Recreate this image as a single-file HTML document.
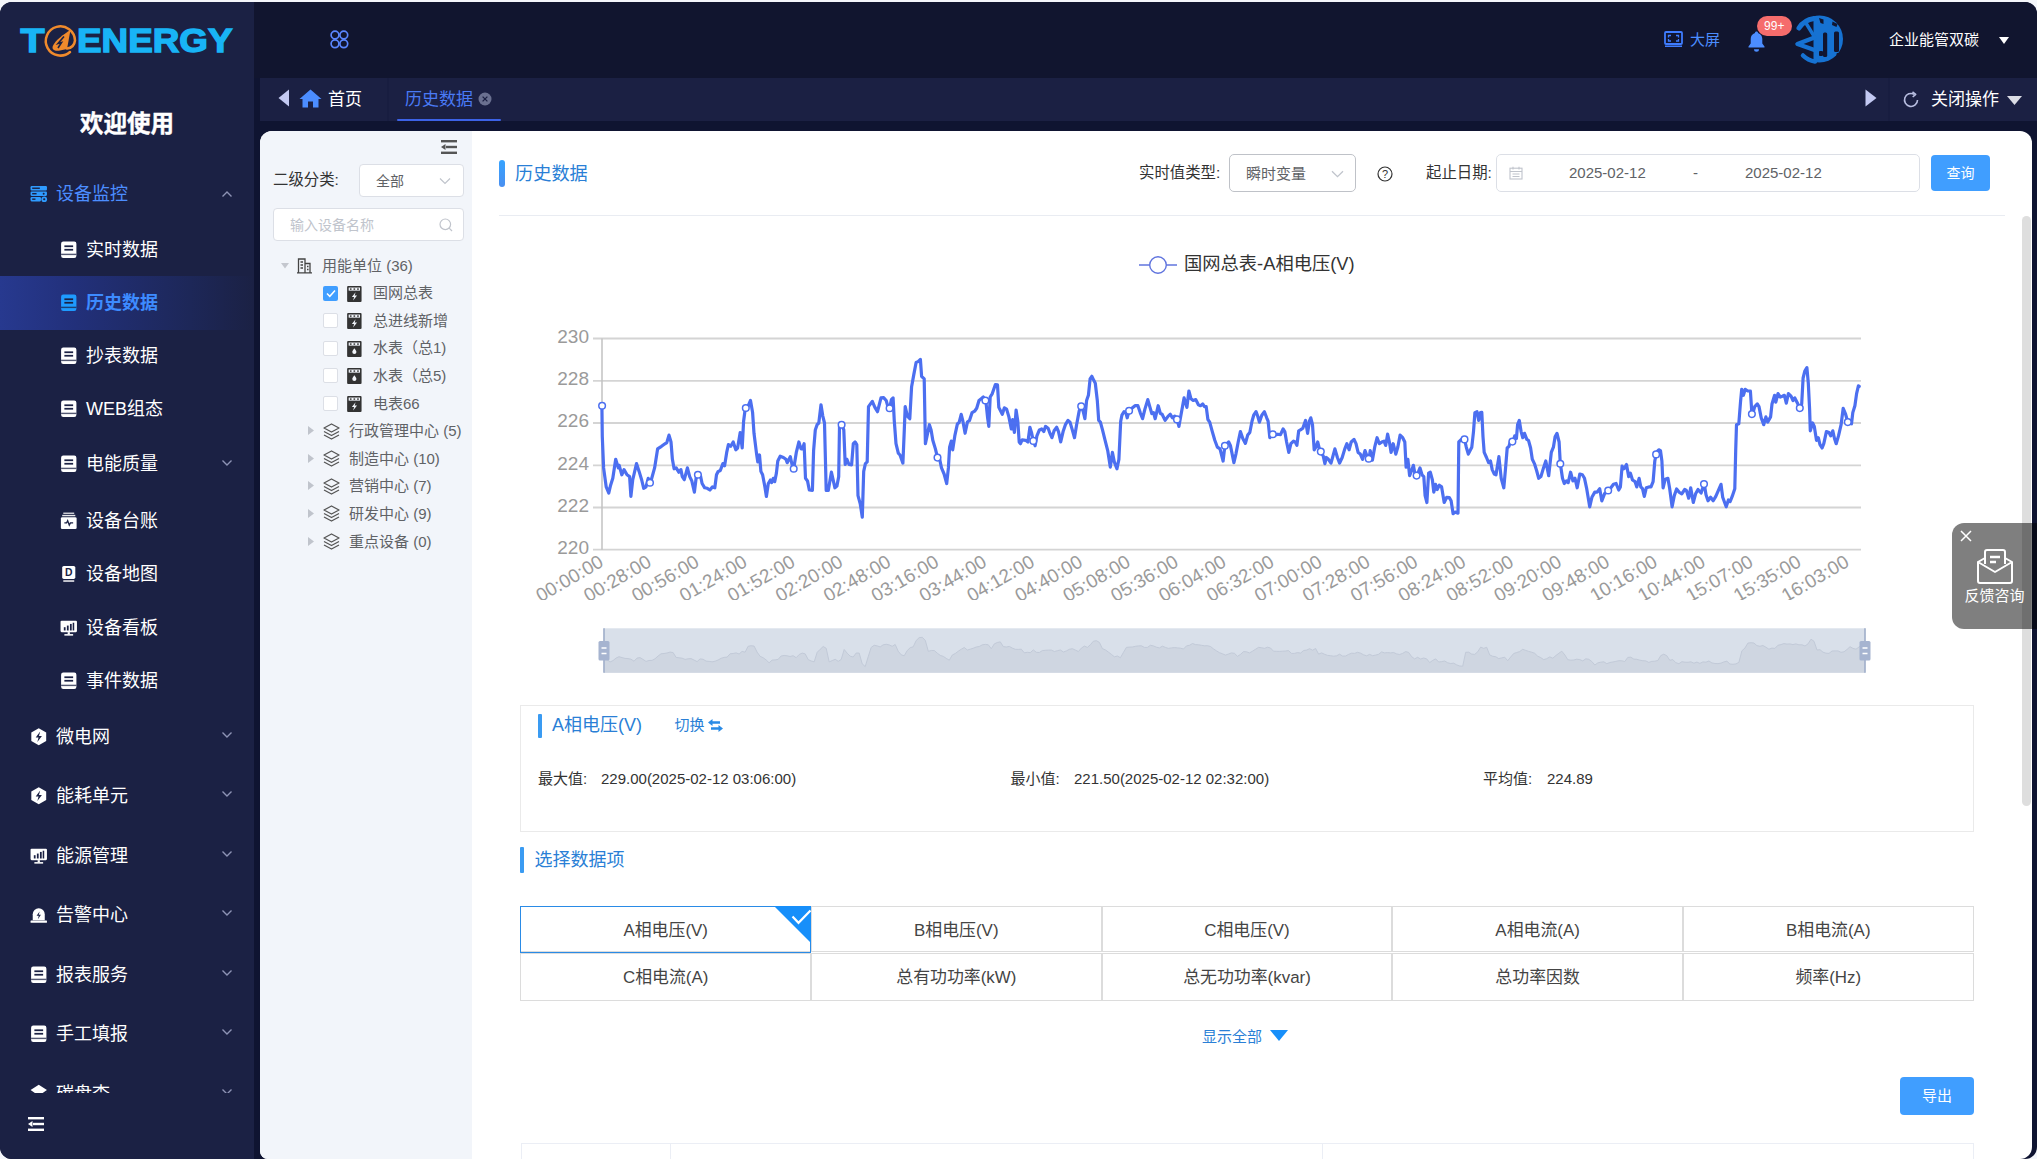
<!DOCTYPE html>
<html lang="zh-CN">
<head>
<meta charset="utf-8">
<title>历史数据</title>
<style>
*{box-sizing:border-box;margin:0;padding:0}
html,body{width:2037px;height:1159px;overflow:hidden;background:#f4f6fb}
body{font-family:"Liberation Sans","Noto Sans CJK SC",sans-serif;color:#333;font-size:14px}
.abs{position:absolute}
#win{position:absolute;left:0;top:2px;width:2037px;height:1157px;border-radius:12px;background:#0f1431;overflow:hidden}
#side{position:absolute;left:0;top:0;width:254px;height:1157px;background:#1b2144}
#topbar{position:absolute;left:254px;top:0;width:1783px;height:76px;background:#11152f}
#tabs{position:absolute;left:260px;top:76px;width:1777px;height:43px;background:#1b2043}
#panel{position:absolute;left:260px;top:129px;width:1772px;height:1028px;background:#fff;border-radius:12px 12px 12px 8px;overflow:hidden}
#tree{position:absolute;left:0;top:0;width:212px;height:1040px;background:#f2f5fa}
svg{display:block;overflow:visible}
.tt{font-size:15px;line-height:22px;color:#606266;white-space:nowrap}
.lab{font-size:15.400px;line-height:22px;color:#333;white-space:nowrap}
.dt{top:7px;font-size:15px;line-height:22px;color:#606266;white-space:nowrap}
.btn{background:#409eff;color:#fff;text-align:center;border-radius:4px;white-space:nowrap}
.st{font-size:15px;line-height:22px;color:#333;white-space:nowrap}
.cell{border:1px solid #dcdcdc;text-align:center;font-size:16.900px;line-height:43.500px;color:#444;white-space:nowrap}
#main{position:absolute;left:0;top:0;width:1772px;height:1040px}
/* sidebar */
#menu{position:absolute;left:0;top:1.300px;width:254px;height:1089.700px;overflow:hidden}
.mi{position:absolute;left:0;width:254px;height:54px;color:#fff;font-size:18px;line-height:54px;white-space:nowrap}
.mi svg.ic{position:absolute;top:18px;width:17.500px;height:17.500px}
.mi .tx{position:absolute}
.mi svg.ar{position:absolute;left:221px;top:21.500px;width:12px;height:8px}
.mi.open svg.ar{top:23.500px}
.l1 .tx{top:.7px}.l1 svg.ic{margin-top:.7px}
.l1 svg.ic{left:29.500px}.l1 .tx{left:56px}
.l2 svg.ic{left:59.500px}.l2 .tx{left:86px}
.mi.act{background:linear-gradient(90deg,#27398f 0%,#22307a 30%,#1d2758 75%,#1b2144 100%);color:#3d8bff;font-weight:bold}
.mi.open{color:#4c8dff}
</style>
</head>
<body>
<div id="win">
<div id="side">
  <svg class="abs" style="left:20px;top:20px" width="216" height="40" viewBox="0 0 216 40">
    <text x="0.500" y="29.500" font-family="Liberation Sans, sans-serif" font-weight="bold" font-size="33.500" fill="#18b4f6" stroke="#18b4f6" stroke-width="1.400" textLength="24" lengthAdjust="spacingAndGlyphs">T</text>
    <path d="M50 30A14.600 14.600 0 1 1 55 18.500c-.5 4.500-3.500 7.500-8 8" fill="none" stroke="#f08a2c" stroke-width="2.500" stroke-linecap="round"/>
    <path d="M50.500 8C44 12 35 18.500 32.800 24c-1.300 4 2.200 5.500 7.200 4.500l7-1.500z" fill="#f08a2c"/>
    <path d="M44 14.500l-6 7 3.500-1-3.500 5.500" fill="none" stroke="#1b2144" stroke-width="1.600"/>
    <text x="57" y="29.500" font-family="Liberation Sans, sans-serif" font-weight="bold" font-size="33.500" fill="#18b4f6" stroke="#18b4f6" stroke-width="1.400" textLength="155.500" lengthAdjust="spacingAndGlyphs">ENERGY</text>
  </svg>
  <div class="abs" style="left:0;top:105px;width:254px;text-align:center;color:#fff;font-weight:bold;font-size:23.500px;line-height:34px;-webkit-text-stroke:.4px #fff">欢迎使用</div>
  <div id="menu">
    <div class="mi l1 open" style="top:163px"><svg class="ic" style="color:#2f9bff" viewBox="0 0 16 16"><rect x="0.500" y="1" width="15" height="4" rx="1" fill="currentColor"/><rect x="0.500" y="6" width="15" height="4" rx="1" fill="currentColor"/><rect x="0.500" y="11" width="9.500" height="4" rx="1" fill="currentColor"/><circle cx="13" cy="13" r="2.600" fill="currentColor"/><rect x="2" y="2.300" width="7" height="1.300" fill="#1b2144"/><rect x="2" y="7.300" width="4" height="1.300" fill="#1b2144"/><rect x="2" y="12.300" width="3" height="1.300" fill="#1b2144"/><circle cx="13" cy="13" r="1" fill="#1b2144"/><circle cx="12.500" cy="8" r=".9" fill="#1b2144"/></svg><span class="tx">设备监控</span><svg class="ar" viewBox="0 0 12 8"><path d="M1.5 6.500L6 2l4.500 4.500" fill="none" stroke="#8e93b5" stroke-width="1.4"/></svg></div>
    <div class="mi l2" style="top:220px"><svg class="ic" viewBox="0 0 16 16"><path d="M3 0.5h10a2 2 0 0 1 2 2v11a2 2 0 0 1-2 2H3a2 2 0 0 1-2-2v-11a2 2 0 0 1 2-2z" fill="currentColor"/><rect x="4" y="4" width="8" height="1.6" fill="#1b2144"/><rect x="4" y="7.2" width="8" height="1.6" fill="#1b2144"/><rect x="1" y="11.6" width="14" height="1.3" fill="#1b2144" opacity=".75"/></svg><span class="tx">实时数据</span></div>
    <div class="mi l2 act" style="top:273px"><svg class="ic" style="color:#1e9bff" viewBox="0 0 16 16"><path d="M3 0.5h10a2 2 0 0 1 2 2v11a2 2 0 0 1-2 2H3a2 2 0 0 1-2-2v-11a2 2 0 0 1 2-2z" fill="currentColor"/><rect x="4" y="4" width="8" height="1.6" fill="#1b2144"/><rect x="4" y="7.2" width="8" height="1.6" fill="#1b2144"/><rect x="1" y="11.6" width="14" height="1.3" fill="#1b2144" opacity=".75"/></svg><span class="tx">历史数据</span></div>
    <div class="mi l2" style="top:326px"><svg class="ic" viewBox="0 0 16 16"><path d="M3 0.5h10a2 2 0 0 1 2 2v11a2 2 0 0 1-2 2H3a2 2 0 0 1-2-2v-11a2 2 0 0 1 2-2z" fill="currentColor"/><rect x="4" y="4" width="8" height="1.6" fill="#1b2144"/><rect x="4" y="7.2" width="8" height="1.6" fill="#1b2144"/><rect x="1" y="11.6" width="14" height="1.3" fill="#1b2144" opacity=".75"/></svg><span class="tx">抄表数据</span></div>
    <div class="mi l2" style="top:379px"><svg class="ic" viewBox="0 0 16 16"><path d="M3 0.5h10a2 2 0 0 1 2 2v11a2 2 0 0 1-2 2H3a2 2 0 0 1-2-2v-11a2 2 0 0 1 2-2z" fill="currentColor"/><rect x="4" y="4" width="8" height="1.6" fill="#1b2144"/><rect x="4" y="7.2" width="8" height="1.6" fill="#1b2144"/><rect x="1" y="11.6" width="14" height="1.3" fill="#1b2144" opacity=".75"/></svg><span class="tx">WEB组态</span></div>
    <div class="mi l2" style="top:434px"><svg class="ic" viewBox="0 0 16 16"><path d="M3 0.5h10a2 2 0 0 1 2 2v11a2 2 0 0 1-2 2H3a2 2 0 0 1-2-2v-11a2 2 0 0 1 2-2z" fill="currentColor"/><rect x="4" y="4" width="8" height="1.6" fill="#1b2144"/><rect x="4" y="7.2" width="8" height="1.6" fill="#1b2144"/><rect x="1" y="11.6" width="14" height="1.3" fill="#1b2144" opacity=".75"/></svg><span class="tx">电能质量</span><svg class="ar" viewBox="0 0 12 8"><path d="M1.5 1.5L6 6l4.500-4.500" fill="none" stroke="#8e93b5" stroke-width="1.4"/></svg></div>
    <div class="mi l2" style="top:491px"><svg class="ic" viewBox="0 0 16 16"><rect x="3" y="0.500" width="10" height="1.300" fill="currentColor" opacity=".8"/><rect x="2" y="2.600" width="12" height="1.300" fill="currentColor" opacity=".9"/><rect x="0.800" y="4.800" width="14.400" height="10.700" rx="1.200" fill="currentColor"/><path d="M4 10h2l1-2 1.500 4 1-2H12" fill="none" stroke="#1b2144" stroke-width="1.200"/></svg><span class="tx">设备台账</span></div>
    <div class="mi l2" style="top:544px"><svg class="ic" viewBox="0 0 16 16"><rect x="2" y="0.800" width="12" height="12" rx="1.500" fill="currentColor"/><text x="8" y="10.300" font-family="Liberation Sans, sans-serif" font-weight="bold" font-size="9.500" text-anchor="middle" fill="#1b2144">D</text><rect x="3" y="14" width="10" height="1.300" fill="currentColor"/></svg><span class="tx">设备地图</span></div>
    <div class="mi l2" style="top:598px"><svg class="ic" viewBox="0 0 16 16"><rect x="0.500" y="1.500" width="15" height="10.500" rx="1" fill="currentColor"/><rect x="4" y="13.800" width="8" height="1.400" fill="currentColor"/><rect x="7" y="12" width="2" height="2" fill="currentColor"/><rect x="3.500" y="7.500" width="1.600" height="3" fill="#1b2144"/><rect x="6.300" y="6" width="1.600" height="4.500" fill="#1b2144"/><rect x="9.100" y="4.500" width="1.600" height="6" fill="#1b2144"/><rect x="11.600" y="3.400" width="1.400" height="7.100" fill="#1b2144"/></svg><span class="tx">设备看板</span></div>
    <div class="mi l2" style="top:651px"><svg class="ic" viewBox="0 0 16 16"><path d="M3 0.5h10a2 2 0 0 1 2 2v11a2 2 0 0 1-2 2H3a2 2 0 0 1-2-2v-11a2 2 0 0 1 2-2z" fill="currentColor"/><rect x="4" y="4" width="8" height="1.6" fill="#1b2144"/><rect x="4" y="7.2" width="8" height="1.6" fill="#1b2144"/><rect x="1" y="11.6" width="14" height="1.3" fill="#1b2144" opacity=".75"/></svg><span class="tx">事件数据</span></div>
    <div class="mi l1" style="top:706px"><svg class="ic" viewBox="0 0 16 16"><path d="M8 0.300L14.800 4.100V11.900L8 15.700L1.200 11.900V4.100z" fill="currentColor"/><path d="M9.300 3.200L5.200 8.700H7.800L6.700 12.800L10.900 7.200H8.200z" fill="#1b2144"/></svg><span class="tx">微电网</span><svg class="ar" viewBox="0 0 12 8"><path d="M1.5 1.5L6 6l4.500-4.500" fill="none" stroke="#8e93b5" stroke-width="1.4"/></svg></div>
    <div class="mi l1" style="top:765px"><svg class="ic" viewBox="0 0 16 16"><path d="M8 0.300L14.800 4.100V11.900L8 15.700L1.200 11.900V4.100z" fill="currentColor"/><path d="M9.300 3.200L5.200 8.700H7.800L6.700 12.800L10.900 7.200H8.200z" fill="#1b2144"/></svg><span class="tx">能耗单元</span><svg class="ar" viewBox="0 0 12 8"><path d="M1.5 1.5L6 6l4.500-4.500" fill="none" stroke="#8e93b5" stroke-width="1.4"/></svg></div>
    <div class="mi l1" style="top:825px"><svg class="ic" viewBox="0 0 16 16"><rect x="0.500" y="1.500" width="15" height="10.500" rx="1" fill="currentColor"/><rect x="4" y="13.800" width="8" height="1.400" fill="currentColor"/><rect x="7" y="12" width="2" height="2" fill="currentColor"/><rect x="3.500" y="7.500" width="1.600" height="3" fill="#1b2144"/><rect x="6.300" y="6" width="1.600" height="4.500" fill="#1b2144"/><rect x="9.100" y="4.500" width="1.600" height="6" fill="#1b2144"/><rect x="11.600" y="3.400" width="1.400" height="7.100" fill="#1b2144"/></svg><span class="tx">能源管理</span><svg class="ar" viewBox="0 0 12 8"><path d="M1.5 1.5L6 6l4.500-4.500" fill="none" stroke="#8e93b5" stroke-width="1.4"/></svg></div>
    <div class="mi l1" style="top:884px"><svg class="ic" viewBox="0 0 16 16"><path d="M2.500 13V7.500a5.500 5.500 0 0 1 11 0V13z" fill="currentColor"/><rect x="0.500" y="13.300" width="15" height="2" rx=".5" fill="currentColor"/><path d="M8.800 5L6 9h2l-.800 3L10 8H8z" fill="#1b2144"/></svg><span class="tx">告警中心</span><svg class="ar" viewBox="0 0 12 8"><path d="M1.5 1.5L6 6l4.500-4.500" fill="none" stroke="#8e93b5" stroke-width="1.4"/></svg></div>
    <div class="mi l1" style="top:944px"><svg class="ic" viewBox="0 0 16 16"><path d="M3 0.5h10a2 2 0 0 1 2 2v11a2 2 0 0 1-2 2H3a2 2 0 0 1-2-2v-11a2 2 0 0 1 2-2z" fill="currentColor"/><rect x="4" y="4" width="8" height="1.6" fill="#1b2144"/><rect x="4" y="7.2" width="8" height="1.6" fill="#1b2144"/><rect x="1" y="11.6" width="14" height="1.3" fill="#1b2144" opacity=".75"/></svg><span class="tx">报表服务</span><svg class="ar" viewBox="0 0 12 8"><path d="M1.5 1.5L6 6l4.500-4.500" fill="none" stroke="#8e93b5" stroke-width="1.4"/></svg></div>
    <div class="mi l1" style="top:1003px"><svg class="ic" viewBox="0 0 16 16"><path d="M3 0.5h10a2 2 0 0 1 2 2v11a2 2 0 0 1-2 2H3a2 2 0 0 1-2-2v-11a2 2 0 0 1 2-2z" fill="currentColor"/><rect x="4" y="4" width="8" height="1.6" fill="#1b2144"/><rect x="4" y="7.2" width="8" height="1.6" fill="#1b2144"/><rect x="1" y="11.6" width="14" height="1.3" fill="#1b2144" opacity=".75"/></svg><span class="tx">手工填报</span><svg class="ar" viewBox="0 0 12 8"><path d="M1.5 1.5L6 6l4.500-4.500" fill="none" stroke="#8e93b5" stroke-width="1.4"/></svg></div>
    <div class="mi l1" style="top:1063px"><svg class="ic" style="margin-top:-1.500px" viewBox="0 0 16 16"><path d="M8 1.500L15.500 6.500 8 11.500 0.500 6.500z" fill="currentColor"/><path d="M0.500 9.500L8 14.500l7.500-5" fill="none" stroke="currentColor" stroke-width="1.500"/></svg><span class="tx">碳盘查</span><svg class="ar" viewBox="0 0 12 8"><path d="M1.5 1.5L6 6l4.500-4.500" fill="none" stroke="#8e93b5" stroke-width="1.4"/></svg></div>
  </div>
  <svg class="abs" style="left:28px;top:1115px;color:#fff" width="16" height="14" viewBox="0 0 16 14"><rect x="0" y="0" width="16" height="2.400" fill="currentColor"/><rect x="0" y="11.600" width="16" height="2.400" fill="currentColor"/><rect x="5" y="5.800" width="11" height="2.400" fill="currentColor"/><path d="M0 7L4.500 4v6z" fill="currentColor"/></svg>
</div>
<div id="topbar">
  <svg class="abs" style="left:76px;top:28px" width="19" height="19" viewBox="0 0 19 19" fill="none" stroke="#5a86ff" stroke-width="1.700"><circle cx="5" cy="5" r="3.900"/><circle cx="13.800" cy="5" r="3.900"/><circle cx="5" cy="13.800" r="3.900"/><circle cx="13.800" cy="13.800" r="3.900"/></svg>
  <svg class="abs" style="left:1410px;top:29px" width="19" height="16" viewBox="0 0 19 16" fill="none" stroke="#3f7cff"><rect x="1" y="1" width="17" height="12" rx="1" stroke-width="1.800"/><path d="M4.500 6.500V4.500h2.500M12 4.500h2.500v2M14.500 8v2H12M7 10H4.500V8" stroke-width="1.300"/><path d="M1 15.300h17" stroke-width="1.400"/></svg>
  <div class="abs" style="left:1436px;top:27px;font-size:15px;line-height:22px;color:#4c8dff">大屏</div>
  <svg class="abs" style="left:1493px;top:28px" width="19" height="22" viewBox="0 0 19 22"><path d="M9.500 1.500c.9 0 1.500.6 1.500 1.400 2.800.8 4.300 3.300 4.300 6.200v4.400l2.200 3v1H1.500v-1l2.200-3V9.100c0-2.900 1.500-5.400 4.300-6.200 0-.8.600-1.400 1.500-1.400z" fill="#4c8dff"/><path d="M7 19.300h5a2.500 2.500 0 0 1-5 0z" fill="#4c8dff"/></svg>
  <div class="abs" style="left:1503px;top:14px;width:34.500px;height:20px;border-radius:10px;background:#f56c6c;color:#fff;font-size:12px;line-height:20px;text-align:center">99+</div>
  <svg class="abs" style="left:1539.500px;top:13px" width="50" height="50" viewBox="0 0 50 50"><defs><clipPath id="avc"><rect x="19.500" y="0" width="31" height="50"/></clipPath></defs><circle cx="25.500" cy="24" r="23.500" fill="#1672d2" clip-path="url(#avc)"/><g fill="#11152f"><rect x="29" y="17.500" width="4.200" height="24.500" rx="1.500"/><rect x="40" y="16.500" width="5" height="20.500" rx="1.500"/><path d="M25 3l4.500 1.500v4.500l-3-1z"/><path d="M38.500 6.500l5 2.500-1 3-4.500-2z"/><rect x="25" y="36" width="4" height="5" rx="1"/><rect x="42.500" y="38" width="2.500" height="4" rx="1"/></g><g fill="none" stroke="#1672d2" stroke-linecap="round" stroke-linejoin="round"><path d="M5 13Q10 5 20 3.500" stroke-width="5"/><path d="M12.500 9l6.500 10.500" stroke-width="3.500"/><path d="M20.500 22.500L3.500 29l17 6" stroke-width="4.500"/><path d="M9 40.500q5 5 12 6" stroke-width="4.500"/></g></svg>
  <div class="abs" style="left:1635px;top:27px;font-size:15px;line-height:22px;color:#fff;white-space:nowrap">企业能管双碳</div>
  <svg class="abs" style="left:1745px;top:35px" width="10" height="7" viewBox="0 0 10 7"><path d="M0 0h10L5 7z" fill="#fff"/></svg>
</div>
<div id="tabs">
  <div class="abs" style="left:127px;top:0;width:2px;height:43px;background:#181d40"></div>
  <div class="abs" style="left:1628px;top:0;width:2px;height:43px;background:#181d40"></div>
  <svg class="abs" style="left:18px;top:11px" width="12" height="18" viewBox="0 0 12 18"><path d="M11 0.500v17L0.500 9z" fill="#c3c9f2"/></svg>
  <svg class="abs" style="left:39px;top:11px" width="23" height="19" viewBox="0 0 23 19"><path d="M11.500 0.500L22.500 10h-3v8.500h-5.500v-6h-5v6H3.500V10h-3z" fill="#4c8dff"/></svg>
  <div class="abs" style="left:68px;top:9px;font-size:17px;line-height:26px;color:#fff">首页</div>
  <div class="abs" style="left:145px;top:9px;font-size:17px;line-height:26px;color:#4a7af5;white-space:nowrap">历史数据</div>
  <svg class="abs" style="left:218px;top:14px" width="14" height="14" viewBox="0 0 14 14"><circle cx="7" cy="7" r="6.500" fill="#6a7090"/><path d="M4.600 4.600l4.800 4.800M9.400 4.600L4.600 9.400" stroke="#1b2043" stroke-width="1.300"/></svg>
  <div class="abs" style="left:137px;top:40.500px;width:104px;height:2.500px;background:#3c62e6;border-radius:1px"></div>
  <svg class="abs" style="left:1605px;top:11px" width="12" height="18" viewBox="0 0 12 18"><path d="M0.500 0.500v17L11.500 9z" fill="#c3c9f2"/></svg>
  <svg class="abs" style="left:1642px;top:13px" width="18" height="18" viewBox="0 0 18 18" fill="none" stroke="#b7bde0" stroke-width="1.600"><path d="M15.500 9A6.500 6.500 0 1 1 12.200 3.300"/><path d="M10.500 0.800l3.200 2.500-3 2.700" stroke-linejoin="round"/></svg>
  <div class="abs" style="left:1671px;top:9px;font-size:17px;line-height:26px;color:#fff;white-space:nowrap">关闭操作</div>
  <svg class="abs" style="left:1747px;top:18px" width="15" height="9" viewBox="0 0 15 9"><path d="M0 0h15L7.500 9z" fill="#dcdde6"/></svg>
</div>
<div id="panel">
<div id="tree">
<svg class="abs" style="left:181px;top:9px;color:#555" width="16" height="14" viewBox="0 0 16 14"><rect x="0" y="0" width="16" height="2.400" fill="currentColor"/><rect x="0" y="11.600" width="16" height="2.400" fill="currentColor"/><rect x="5" y="5.800" width="11" height="2.400" fill="currentColor"/><path d="M0 7L4.500 4v6z" fill="currentColor"/></svg>
<div class="abs" style="left:13px;top:38px;font-size:15.400px;line-height:22px;color:#333;white-space:nowrap">二级分类:</div>
<div class="abs" style="left:99px;top:33px;width:105px;height:33px;border:1px solid #dcdfe6;border-radius:4px;background:#fff"><span class="abs" style="left:16px;top:5px;font-size:14px;line-height:22px;color:#606266">全部</span><svg class="abs" style="left:79px;top:12px" width="12" height="8" viewBox="0 0 12 8"><path d="M1 1.500L6 6.500l5-5" fill="none" stroke="#c0c4cc" stroke-width="1.200"/></svg></div>
<div class="abs" style="left:13px;top:77px;width:191px;height:33px;border:1px solid #dcdfe6;border-radius:4px;background:#fff"><span class="abs" style="left:16px;top:5px;font-size:14px;line-height:22px;color:#c0c4cc;white-space:nowrap">输入设备名称</span><svg class="abs" style="left:165px;top:9px" width="14" height="14" viewBox="0 0 14 14" fill="none" stroke="#c0c4cc" stroke-width="1.200"><circle cx="6.300" cy="6.300" r="5.300"/><path d="M10.200 10.200l2.800 2.800"/></svg></div>
<svg class="abs" style="left:21px;top:132.0px" width="8" height="5.500" viewBox="0 0 9 6"><path d="M0 0h9L4.500 6z" fill="#c4c7ce"/></svg>
<svg class="abs" style="left:37px;top:127.3px" width="15" height="16" viewBox="0 0 15 16" fill="none" stroke="#444" stroke-width="1.300"><path d="M1.500 14.500V1h6.500v13.500M8 5.500h5v9M0 14.800h15M3.500 4h2.500M3.500 7h2.500M3.500 10h2.500M10 8.500h1.500M10 11.500h1.500"/></svg>
<div class="abs tt" style="left:62px;top:123.5px">用能单位 (36)</div>
<div class="abs" style="left:63px;top:154.6px;width:15px;height:15px;border-radius:2px;background:#409eff"><svg class="abs" style="left:2.500px;top:3px" width="10" height="9" viewBox="0 0 10 9"><path d="M1 4.500l2.800 2.800L9 1.500" fill="none" stroke="#fff" stroke-width="1.500"/></svg></div>
<svg class="abs" style="left:87px;top:154.6px" width="14.700" height="16.500" viewBox="0 0 14 16"><rect x="0" y="0" width="14" height="15.500" rx="1" fill="#333"/><rect x="1.500" y="1.500" width="11" height="3" fill="#f2f5fa"/><rect x="2.700" y="2.300" width="1.600" height="1.400" fill="#333"/><rect x="6.200" y="2.300" width="1.600" height="1.400" fill="#333"/><rect x="9.700" y="2.300" width="1.600" height="1.400" fill="#333"/><path d="M8.200 6L4.600 10.600h2.200l-1 3.400L9.600 9.200H7.300z" fill="#f2f5fa"/></svg>
<div class="abs tt" style="left:113px;top:151.1px">国网总表</div>
<div class="abs" style="left:63px;top:182.2px;width:15px;height:15px;border-radius:2px;background:#fff;border:1px solid #dcdfe6"></div>
<svg class="abs" style="left:87px;top:182.2px" width="14.700" height="16.500" viewBox="0 0 14 16"><rect x="0" y="0" width="14" height="15.500" rx="1" fill="#333"/><rect x="1.500" y="1.500" width="11" height="3" fill="#f2f5fa"/><rect x="2.700" y="2.300" width="1.600" height="1.400" fill="#333"/><rect x="6.200" y="2.300" width="1.600" height="1.400" fill="#333"/><rect x="9.700" y="2.300" width="1.600" height="1.400" fill="#333"/><path d="M8.200 6L4.600 10.600h2.200l-1 3.400L9.600 9.200H7.300z" fill="#f2f5fa"/></svg>
<div class="abs tt" style="left:113px;top:178.7px">总进线新增</div>
<div class="abs" style="left:63px;top:209.8px;width:15px;height:15px;border-radius:2px;background:#fff;border:1px solid #dcdfe6"></div>
<svg class="abs" style="left:87px;top:209.8px" width="14.700" height="16.500" viewBox="0 0 14 16"><rect x="0" y="0" width="14" height="15.500" rx="1" fill="#333"/><rect x="1.500" y="1.500" width="11" height="3" fill="#f2f5fa"/><rect x="2.700" y="2.300" width="1.600" height="1.400" fill="#333"/><rect x="6.200" y="2.300" width="1.600" height="1.400" fill="#333"/><rect x="9.700" y="2.300" width="1.600" height="1.400" fill="#333"/><path d="M7 7c1.300 1.700 2 2.800 2 3.700a2 2 0 0 1-4 0c0-.9.700-2 2-3.700z" fill="#f2f5fa"/></svg>
<div class="abs tt" style="left:113px;top:206.3px">水表（总1)</div>
<div class="abs" style="left:63px;top:237.4px;width:15px;height:15px;border-radius:2px;background:#fff;border:1px solid #dcdfe6"></div>
<svg class="abs" style="left:87px;top:237.4px" width="14.700" height="16.500" viewBox="0 0 14 16"><rect x="0" y="0" width="14" height="15.500" rx="1" fill="#333"/><rect x="1.500" y="1.500" width="11" height="3" fill="#f2f5fa"/><rect x="2.700" y="2.300" width="1.600" height="1.400" fill="#333"/><rect x="6.200" y="2.300" width="1.600" height="1.400" fill="#333"/><rect x="9.700" y="2.300" width="1.600" height="1.400" fill="#333"/><path d="M7 7c1.300 1.700 2 2.800 2 3.700a2 2 0 0 1-4 0c0-.9.700-2 2-3.700z" fill="#f2f5fa"/></svg>
<div class="abs tt" style="left:113px;top:233.9px">水表（总5)</div>
<div class="abs" style="left:63px;top:265.0px;width:15px;height:15px;border-radius:2px;background:#fff;border:1px solid #dcdfe6"></div>
<svg class="abs" style="left:87px;top:265.0px" width="14.700" height="16.500" viewBox="0 0 14 16"><rect x="0" y="0" width="14" height="15.500" rx="1" fill="#333"/><rect x="1.500" y="1.500" width="11" height="3" fill="#f2f5fa"/><rect x="2.700" y="2.300" width="1.600" height="1.400" fill="#333"/><rect x="6.200" y="2.300" width="1.600" height="1.400" fill="#333"/><rect x="9.700" y="2.300" width="1.600" height="1.400" fill="#333"/><path d="M8.200 6L4.600 10.600h2.200l-1 3.400L9.600 9.200H7.300z" fill="#f2f5fa"/></svg>
<div class="abs tt" style="left:113px;top:261.5px">电表66</div>
<svg class="abs" style="left:48px;top:295.1px" width="6" height="9" viewBox="0 0 6 9"><path d="M0 0v9L6 4.500z" fill="#c0c4cc"/></svg>
<svg class="abs" style="left:63px;top:291.6px" width="17" height="17" viewBox="0 0 17 17" fill="none" stroke="#555" stroke-width="1.300" stroke-linejoin="round"><path d="M8.500 1L16 5 8.500 9 1 5z"/><path d="M1 8.500l7.500 4 7.500-4"/><path d="M1 12l7.500 4 7.500-4"/></svg>
<div class="abs tt" style="left:89px;top:289.1px">行政管理中心 (5)</div>
<svg class="abs" style="left:48px;top:322.7px" width="6" height="9" viewBox="0 0 6 9"><path d="M0 0v9L6 4.500z" fill="#c0c4cc"/></svg>
<svg class="abs" style="left:63px;top:319.2px" width="17" height="17" viewBox="0 0 17 17" fill="none" stroke="#555" stroke-width="1.300" stroke-linejoin="round"><path d="M8.500 1L16 5 8.500 9 1 5z"/><path d="M1 8.500l7.500 4 7.500-4"/><path d="M1 12l7.500 4 7.500-4"/></svg>
<div class="abs tt" style="left:89px;top:316.7px">制造中心 (10)</div>
<svg class="abs" style="left:48px;top:350.3px" width="6" height="9" viewBox="0 0 6 9"><path d="M0 0v9L6 4.500z" fill="#c0c4cc"/></svg>
<svg class="abs" style="left:63px;top:346.8px" width="17" height="17" viewBox="0 0 17 17" fill="none" stroke="#555" stroke-width="1.300" stroke-linejoin="round"><path d="M8.500 1L16 5 8.500 9 1 5z"/><path d="M1 8.500l7.500 4 7.500-4"/><path d="M1 12l7.500 4 7.500-4"/></svg>
<div class="abs tt" style="left:89px;top:344.3px">营销中心 (7)</div>
<svg class="abs" style="left:48px;top:377.9px" width="6" height="9" viewBox="0 0 6 9"><path d="M0 0v9L6 4.500z" fill="#c0c4cc"/></svg>
<svg class="abs" style="left:63px;top:374.4px" width="17" height="17" viewBox="0 0 17 17" fill="none" stroke="#555" stroke-width="1.300" stroke-linejoin="round"><path d="M8.500 1L16 5 8.500 9 1 5z"/><path d="M1 8.500l7.500 4 7.500-4"/><path d="M1 12l7.500 4 7.500-4"/></svg>
<div class="abs tt" style="left:89px;top:371.9px">研发中心 (9)</div>
<svg class="abs" style="left:48px;top:405.5px" width="6" height="9" viewBox="0 0 6 9"><path d="M0 0v9L6 4.500z" fill="#c0c4cc"/></svg>
<svg class="abs" style="left:63px;top:402.0px" width="17" height="17" viewBox="0 0 17 17" fill="none" stroke="#555" stroke-width="1.300" stroke-linejoin="round"><path d="M8.500 1L16 5 8.500 9 1 5z"/><path d="M1 8.500l7.500 4 7.500-4"/><path d="M1 12l7.500 4 7.500-4"/></svg>
<div class="abs tt" style="left:89px;top:399.5px">重点设备 (0)</div>
</div>
<div id="main">
<div class="abs" style="left:239px;top:29px;width:6px;height:27px;border-radius:3px;background:linear-gradient(180deg,#36a3ff,#4a8ff0)"></div>
<div class="abs" style="left:255px;top:29.5px;font-size:18.200px;line-height:27px;color:#2a7fd6;white-space:nowrap">历史数据</div>
<div class="abs lab" style="left:879px;top:31px">实时值类型:</div>
<div class="abs" style="left:969px;top:23px;width:127px;height:38px;border:1px solid #bfc2c8;border-radius:5px;background:#fff"><span class="abs" style="left:16px;top:8px;font-size:15px;line-height:22px;color:#606266;white-space:nowrap">瞬时变量</span><svg class="abs" style="left:101px;top:15px" width="13" height="8" viewBox="0 0 13 8"><path d="M1 1.200L6.500 6.700 12 1.200" fill="none" stroke="#c0c4cc" stroke-width="1.300"/></svg></div>
<svg class="abs" style="left:1117px;top:35px" width="16" height="16" viewBox="0 0 16 16"><circle cx="8" cy="8" r="7" fill="none" stroke="#333" stroke-width="1.200"/><text x="8" y="12" font-size="11" font-family="Liberation Sans, sans-serif" text-anchor="middle" fill="#333">?</text></svg>
<div class="abs lab" style="left:1166px;top:31px">起止日期:</div>
<div class="abs" style="left:1236px;top:23px;width:424px;height:38px;border:1px solid #dcdfe6;border-radius:5px;background:#fff"><svg class="abs" style="left:12px;top:11px" width="14" height="14" viewBox="0 0 14 14" fill="none" stroke="#c0c4cc" stroke-width="1.100"><rect x="1" y="2.200" width="12" height="10.800"/><path d="M1 5.500h12M4 0.800v2.800M10 0.800v2.800M3.500 8h7M3.500 10.500h7"/></svg><span class="abs dt" style="left:72px">2025-02-12</span><span class="abs dt" style="left:196px">-</span><span class="abs dt" style="left:248px">2025-02-12</span></div>
<div class="abs btn" style="left:1671px;top:24px;width:59px;height:36px;line-height:36px;font-size:14px">查询</div>
<div class="abs" style="left:239px;top:83.5px;width:1506px;height:1px;background:#e9ecf2"></div>
<div class="abs" style="left:1762px;top:85px;width:9.300px;height:590px;border-radius:4.500px;background:#dedede"></div>
<svg class="abs" style="left:878px;top:124px" width="40" height="20" viewBox="0 0 40 20"><path d="M1 10h38" stroke="#6074de" stroke-width="1.400"/><circle cx="20" cy="10" r="8.300" fill="#fff" stroke="#6074de" stroke-width="1.400"/></svg>
<div class="abs" style="left:924px;top:120px;font-size:18.300px;line-height:26px;color:#333;white-space:nowrap">国网总表-A相电压(V)</div>
<svg class="abs" style="left:0;top:0" width="1772" height="700" viewBox="260 131 1772 700" font-family="Liberation Sans, sans-serif">
<path d="M593 338.5H1861" stroke="#d4d4d4" stroke-width="1.800"/>
<path d="M593 380.8H1861" stroke="#d4d4d4" stroke-width="1.800"/>
<path d="M593 423.0H1861" stroke="#d4d4d4" stroke-width="1.800"/>
<path d="M593 465.3H1861" stroke="#d4d4d4" stroke-width="1.800"/>
<path d="M593 507.5H1861" stroke="#d4d4d4" stroke-width="1.800"/>
<path d="M593 549.7H1861" stroke="#d4d4d4" stroke-width="1.800"/>
<path d="M602 338.500V549.700" stroke="#c2c2c2" stroke-width="1.500"/>
<text x="589" y="342.8" font-size="19" fill="#9a9a9a" text-anchor="end">230</text>
<text x="589" y="385.1" font-size="19" fill="#9a9a9a" text-anchor="end">228</text>
<text x="589" y="427.3" font-size="19" fill="#9a9a9a" text-anchor="end">226</text>
<text x="589" y="469.6" font-size="19" fill="#9a9a9a" text-anchor="end">224</text>
<text x="589" y="511.8" font-size="19" fill="#9a9a9a" text-anchor="end">222</text>
<text x="589" y="554.0" font-size="19" fill="#9a9a9a" text-anchor="end">220</text>
<text transform="translate(604.7 565.5) rotate(-30)" font-size="19" fill="#9a9a9a" text-anchor="end">00:00:00</text>
<text transform="translate(652.6 565.5) rotate(-30)" font-size="19" fill="#9a9a9a" text-anchor="end">00:28:00</text>
<text transform="translate(700.5 565.5) rotate(-30)" font-size="19" fill="#9a9a9a" text-anchor="end">00:56:00</text>
<text transform="translate(748.4 565.5) rotate(-30)" font-size="19" fill="#9a9a9a" text-anchor="end">01:24:00</text>
<text transform="translate(796.3 565.5) rotate(-30)" font-size="19" fill="#9a9a9a" text-anchor="end">01:52:00</text>
<text transform="translate(844.2 565.5) rotate(-30)" font-size="19" fill="#9a9a9a" text-anchor="end">02:20:00</text>
<text transform="translate(892.2 565.5) rotate(-30)" font-size="19" fill="#9a9a9a" text-anchor="end">02:48:00</text>
<text transform="translate(940.1 565.5) rotate(-30)" font-size="19" fill="#9a9a9a" text-anchor="end">03:16:00</text>
<text transform="translate(988.0 565.5) rotate(-30)" font-size="19" fill="#9a9a9a" text-anchor="end">03:44:00</text>
<text transform="translate(1035.9 565.5) rotate(-30)" font-size="19" fill="#9a9a9a" text-anchor="end">04:12:00</text>
<text transform="translate(1083.8 565.5) rotate(-30)" font-size="19" fill="#9a9a9a" text-anchor="end">04:40:00</text>
<text transform="translate(1131.7 565.5) rotate(-30)" font-size="19" fill="#9a9a9a" text-anchor="end">05:08:00</text>
<text transform="translate(1179.6 565.5) rotate(-30)" font-size="19" fill="#9a9a9a" text-anchor="end">05:36:00</text>
<text transform="translate(1227.5 565.5) rotate(-30)" font-size="19" fill="#9a9a9a" text-anchor="end">06:04:00</text>
<text transform="translate(1275.4 565.5) rotate(-30)" font-size="19" fill="#9a9a9a" text-anchor="end">06:32:00</text>
<text transform="translate(1323.3 565.5) rotate(-30)" font-size="19" fill="#9a9a9a" text-anchor="end">07:00:00</text>
<text transform="translate(1371.3 565.5) rotate(-30)" font-size="19" fill="#9a9a9a" text-anchor="end">07:28:00</text>
<text transform="translate(1419.2 565.5) rotate(-30)" font-size="19" fill="#9a9a9a" text-anchor="end">07:56:00</text>
<text transform="translate(1467.1 565.5) rotate(-30)" font-size="19" fill="#9a9a9a" text-anchor="end">08:24:00</text>
<text transform="translate(1515.0 565.5) rotate(-30)" font-size="19" fill="#9a9a9a" text-anchor="end">08:52:00</text>
<text transform="translate(1562.9 565.5) rotate(-30)" font-size="19" fill="#9a9a9a" text-anchor="end">09:20:00</text>
<text transform="translate(1610.8 565.5) rotate(-30)" font-size="19" fill="#9a9a9a" text-anchor="end">09:48:00</text>
<text transform="translate(1658.7 565.5) rotate(-30)" font-size="19" fill="#9a9a9a" text-anchor="end">10:16:00</text>
<text transform="translate(1706.6 565.5) rotate(-30)" font-size="19" fill="#9a9a9a" text-anchor="end">10:44:00</text>
<text transform="translate(1754.5 565.5) rotate(-30)" font-size="19" fill="#9a9a9a" text-anchor="end">15:07:00</text>
<text transform="translate(1802.4 565.5) rotate(-30)" font-size="19" fill="#9a9a9a" text-anchor="end">15:35:00</text>
<text transform="translate(1850.4 565.5) rotate(-30)" font-size="19" fill="#9a9a9a" text-anchor="end">16:03:00</text>
<rect x="520" y="600" width="1400" height="27" fill="#fff"/>
<path d="M601.9 405.7 602.3 436.8 603.6 467.9 606.2 486.9 608.8 493.0 610.6 485.2 612.8 478.3 615.7 459.3 618.3 467.9 619.2 465.3 621.8 474.8 624.0 469.6 627.0 474.8 629.6 476.6 630.9 496.4 632.7 480.0 636.5 463.6 639.1 471.4 641.7 480.0 643.7 488.3 646.0 486.9 648.2 478.3 650.3 483.5 654.6 467.9 657.6 448.9 661.5 446.3 665.0 443.7 666.7 442.9 669.0 435.1 671.0 442.0 672.4 459.3 674.1 468.8 676.2 467.9 678.8 472.2 680.9 469.6 682.3 476.6 684.3 479.7 687.4 467.9 689.7 476.6 691.8 480.9 694.4 492.1 696.1 478.3 697.8 474.8 700.4 475.2 702.1 483.5 704.7 487.8 707.3 488.3 709.9 490.0 712.5 486.9 714.8 487.8 716.5 474.8 718.0 471.7 720.3 470.5 722.9 463.6 724.6 465.8 726.7 452.4 728.4 444.6 730.7 446.3 733.2 442.0 735.8 449.8 737.6 448.0 740.2 432.5 742.2 448.0 743.6 421.2 745.3 408.3 747.9 406.6 750.5 400.5 752.6 412.6 754.0 433.3 756.6 454.1 757.8 461.9 759.5 455.0 760.9 471.4 762.6 474.8 764.9 486.9 766.4 496.4 768.3 483.5 770.4 480.0 771.6 482.6 773.3 478.3 774.7 481.7 776.4 473.1 777.8 461.0 780.2 456.2 783.4 457.5 785.9 459.3 787.2 462.7 790.3 456.7 792.0 464.5 793.7 468.8 796.3 452.4 798.9 442.0 801.0 448.9 802.4 448.9 804.1 443.7 805.5 478.3 807.5 480.9 809.3 490.0 812.4 490.4 813.6 450.6 815.3 429.9 817.1 424.7 818.8 423.0 821.0 404.8 822.8 416.1 824.5 423.0 826.2 490.4 828.3 490.4 831.4 472.2 834.9 487.8 836.9 486.1 838.7 476.6 839.5 426.4 841.8 424.7 843.8 429.9 845.2 464.5 846.9 459.3 849.0 464.5 851.6 464.8 853.3 443.7 855.1 442.0 856.8 444.6 858.0 495.6 860.3 504.2 862.3 517.2 863.7 471.4 865.4 463.6 867.2 461.9 868.5 406.6 872.3 401.4 874.9 407.4 877.5 411.7 881.0 397.9 883.6 397.6 886.2 400.5 887.9 406.6 889.6 408.3 891.4 399.6 893.1 397.9 894.3 421.2 896.0 443.7 898.3 453.2 900.0 455.0 902.9 463.1 904.3 429.9 905.2 406.6 907.4 416.1 909.8 418.7 911.6 386.7 913.8 374.6 916.1 362.5 918.1 361.6 920.4 359.4 921.6 376.3 924.2 378.9 925.4 443.7 927.6 433.3 929.4 424.7 931.1 429.9 932.8 440.3 935.4 448.9 937.7 458.4 939.7 459.3 941.5 467.9 944.1 474.0 946.7 483.5 948.4 467.9 949.6 447.2 951.3 441.1 952.7 449.8 954.8 435.9 957.4 423.8 959.1 422.6 961.2 414.3 962.9 421.2 965.1 433.3 967.4 422.1 969.5 420.4 972.1 412.6 974.6 411.2 976.7 408.3 979.0 400.5 981.2 398.8 983.3 397.0 985.9 401.4 987.6 417.8 988.8 426.4 990.2 397.0 992.3 393.6 995.4 384.6 997.5 384.9 998.8 407.4 1002.3 414.3 1004.4 407.8 1006.6 409.1 1008.9 416.9 1011.3 429.0 1012.7 419.5 1014.4 432.5 1016.1 410.0 1017.8 421.2 1019.2 442.0 1020.4 443.7 1022.2 439.9 1025.6 440.3 1027.9 442.0 1029.9 427.3 1031.7 433.3 1033.1 440.3 1035.1 445.8 1036.9 435.9 1039.4 429.9 1041.7 429.0 1043.8 431.6 1045.5 426.4 1048.1 428.2 1050.3 434.2 1051.9 437.7 1054.1 430.8 1056.7 427.3 1058.5 431.6 1060.7 442.0 1063.1 431.6 1065.4 424.7 1068.0 420.4 1070.0 422.1 1072.3 429.9 1074.5 437.7 1076.6 424.7 1079.2 410.9 1081.4 405.7 1083.5 412.6 1084.9 418.7 1086.6 400.5 1088.4 395.3 1090.1 378.9 1091.8 376.3 1093.9 380.6 1095.3 383.2 1097.3 400.5 1098.7 420.4 1100.4 422.1 1102.5 429.9 1105.1 440.3 1107.7 450.6 1110.3 467.1 1112.4 452.4 1114.3 461.9 1116.9 468.8 1118.9 459.3 1120.7 421.2 1121.9 415.2 1124.1 411.7 1125.9 412.6 1127.2 417.8 1129.3 410.0 1131.9 408.3 1135.0 405.7 1137.9 405.7 1140.2 412.6 1142.6 418.7 1144.9 409.1 1147.8 399.6 1150.0 407.4 1151.8 413.5 1153.5 412.6 1155.2 418.7 1158.2 405.7 1160.4 413.5 1162.1 414.3 1165.1 420.4 1168.2 416.1 1170.3 414.3 1172.5 417.8 1174.8 416.1 1176.8 418.7 1178.9 426.4 1181.1 414.3 1184.1 397.9 1186.9 407.4 1188.9 391.0 1191.0 398.8 1193.2 400.5 1195.8 399.6 1198.4 404.8 1200.5 405.7 1202.7 404.0 1204.5 406.6 1206.2 406.6 1207.9 419.5 1209.7 422.1 1212.3 431.6 1214.8 440.3 1217.4 447.2 1220.0 448.9 1223.1 461.0 1224.9 445.8 1228.7 442.0 1230.4 445.4 1233.9 462.7 1235.9 454.1 1238.2 442.0 1240.4 431.6 1242.8 438.5 1245.4 443.4 1247.7 435.1 1249.8 432.5 1252.0 421.2 1253.7 415.2 1256.0 411.7 1257.7 416.1 1259.4 422.1 1261.8 415.2 1264.4 411.7 1266.7 417.8 1268.1 421.2 1269.8 437.7 1272.7 434.2 1275.3 435.1 1277.9 434.2 1280.5 434.7 1283.1 429.0 1284.8 431.6 1286.6 442.0 1288.8 452.4 1290.9 443.7 1293.5 441.1 1295.2 442.0 1296.9 445.4 1298.7 430.8 1300.4 429.9 1302.8 428.2 1305.6 420.4 1307.6 433.3 1309.4 421.2 1310.8 417.8 1312.5 424.7 1314.2 449.8 1315.9 447.2 1317.7 442.0 1319.4 448.9 1321.1 452.4 1323.2 455.8 1324.9 463.6 1326.3 457.5 1328.4 459.3 1331.0 463.1 1333.0 455.8 1334.9 448.9 1337.4 457.5 1339.6 463.1 1342.2 457.5 1344.8 448.9 1346.9 443.7 1349.1 449.8 1351.2 442.0 1354.0 439.4 1356.0 443.7 1358.1 452.4 1360.3 454.1 1362.6 459.3 1365.0 450.6 1367.3 456.7 1369.0 459.3 1370.2 450.6 1372.4 460.1 1374.7 447.2 1377.1 437.7 1379.4 443.7 1381.9 442.0 1384.0 441.1 1385.7 445.4 1387.6 434.2 1389.7 443.7 1391.1 452.4 1393.2 443.7 1395.8 454.1 1397.8 447.2 1400.1 435.1 1402.7 437.7 1404.8 442.0 1406.1 467.1 1407.9 459.3 1409.6 475.7 1411.3 471.4 1413.4 465.3 1415.1 474.8 1416.9 475.7 1420.0 467.9 1422.0 474.8 1423.8 476.6 1425.1 495.6 1426.9 502.5 1428.6 473.1 1430.3 472.2 1432.4 480.0 1433.8 492.1 1435.5 484.3 1437.2 489.5 1439.3 485.2 1441.6 486.9 1444.2 502.5 1446.7 497.3 1449.3 497.6 1451.1 500.8 1453.1 513.7 1455.4 512.0 1458.0 513.2 1458.8 442.0 1461.4 439.4 1464.5 439.4 1466.3 447.2 1468.3 454.1 1470.1 450.6 1471.8 447.2 1473.5 431.6 1474.9 412.6 1477.0 411.7 1478.7 420.4 1480.4 412.6 1481.8 412.3 1483.0 436.8 1484.2 452.4 1486.5 457.5 1488.6 462.7 1490.5 461.0 1492.2 469.6 1494.3 474.0 1496.0 474.8 1498.9 456.7 1501.2 478.3 1503.8 487.8 1505.5 468.8 1507.2 448.0 1509.0 446.3 1510.7 440.3 1512.9 442.0 1514.7 435.9 1516.4 438.5 1517.6 424.7 1519.3 420.4 1521.1 431.6 1522.8 437.7 1524.5 433.3 1526.8 439.4 1528.5 440.3 1530.6 448.0 1532.3 459.3 1534.4 463.6 1536.6 470.5 1538.7 478.3 1540.9 476.6 1543.5 467.9 1545.8 461.0 1548.7 475.7 1551.3 452.4 1553.4 447.2 1555.1 436.8 1557.0 433.3 1559.1 442.0 1560.3 463.6 1562.5 478.3 1564.3 483.5 1566.5 480.9 1568.2 482.6 1570.6 472.2 1572.9 480.9 1575.0 478.3 1577.2 487.8 1579.8 474.0 1582.4 474.8 1584.5 478.3 1586.7 488.7 1589.7 506.8 1591.9 497.3 1594.8 492.1 1597.1 492.1 1599.7 488.7 1601.8 500.8 1604.5 493.8 1608.3 490.4 1610.9 487.8 1613.5 484.3 1616.1 483.5 1618.7 490.0 1620.4 486.9 1622.1 466.2 1623.9 468.8 1626.5 464.5 1628.7 476.6 1630.4 473.1 1632.5 480.0 1635.1 481.7 1636.8 486.9 1639.1 478.3 1640.8 486.9 1642.5 488.7 1644.3 496.4 1646.3 487.8 1648.9 486.9 1651.0 486.9 1653.1 481.7 1654.8 461.0 1656.5 452.4 1658.8 449.8 1660.5 450.6 1661.9 461.0 1663.1 487.8 1665.2 479.2 1667.9 478.3 1669.7 488.7 1672.1 506.8 1674.3 495.6 1676.6 489.0 1679.0 492.1 1681.8 493.8 1684.7 489.5 1686.4 490.4 1688.7 498.2 1690.7 487.8 1693.3 502.5 1695.6 493.8 1698.0 489.5 1701.1 493.0 1704.2 483.5 1706.0 494.7 1708.0 500.8 1710.6 497.3 1713.2 500.8 1715.8 496.4 1718.4 490.4 1721.0 484.3 1722.7 497.3 1726.2 506.8 1728.4 499.9 1730.1 501.6 1732.2 496.4 1734.8 488.7 1735.7 450.6 1736.5 424.7 1738.8 423.8 1740.5 402.2 1741.7 389.3 1743.4 395.3 1745.2 389.3 1747.8 391.0 1750.4 391.0 1751.6 409.1 1752.1 416.1 1754.7 406.6 1757.3 404.0 1759.0 406.6 1761.2 417.8 1763.7 424.7 1765.9 416.9 1767.6 422.1 1770.6 416.9 1772.0 404.0 1774.6 395.3 1775.8 402.2 1778.0 393.6 1780.3 397.0 1782.3 396.2 1784.4 395.3 1786.3 403.1 1788.4 393.6 1791.0 396.2 1793.0 400.5 1794.8 397.9 1797.0 402.2 1800.0 408.3 1801.7 404.0 1803.1 378.0 1804.8 371.1 1806.9 367.7 1808.3 383.2 1809.6 409.1 1810.3 430.8 1812.6 423.0 1814.3 426.4 1816.5 440.3 1818.3 437.7 1820.0 444.6 1822.1 448.0 1823.8 443.7 1826.4 431.6 1829.0 432.5 1830.7 435.9 1832.8 430.8 1834.5 438.5 1836.2 443.7 1838.5 435.9 1841.1 424.7 1843.2 408.3 1845.4 413.5 1848.0 423.0 1851.5 423.8 1852.8 412.6 1854.9 405.7 1856.6 393.6 1858.4 385.8 1859.2 386.3" fill="none" stroke="#4c6ff0" stroke-width="3.200" stroke-linejoin="round" stroke-linecap="round"/>
<circle cx="602.1" cy="405.7" r="3.300" fill="#fff" stroke="#4c6ff0" stroke-width="1.500"/>
<circle cx="650.0" cy="482.8" r="3.300" fill="#fff" stroke="#4c6ff0" stroke-width="1.500"/>
<circle cx="697.9" cy="474.8" r="3.300" fill="#fff" stroke="#4c6ff0" stroke-width="1.500"/>
<circle cx="745.8" cy="408.0" r="3.300" fill="#fff" stroke="#4c6ff0" stroke-width="1.500"/>
<circle cx="793.7" cy="468.7" r="3.300" fill="#fff" stroke="#4c6ff0" stroke-width="1.500"/>
<circle cx="841.6" cy="424.8" r="3.300" fill="#fff" stroke="#4c6ff0" stroke-width="1.500"/>
<circle cx="889.6" cy="408.2" r="3.300" fill="#fff" stroke="#4c6ff0" stroke-width="1.500"/>
<circle cx="937.5" cy="457.6" r="3.300" fill="#fff" stroke="#4c6ff0" stroke-width="1.500"/>
<circle cx="985.4" cy="400.5" r="3.300" fill="#fff" stroke="#4c6ff0" stroke-width="1.500"/>
<circle cx="1033.3" cy="440.9" r="3.300" fill="#fff" stroke="#4c6ff0" stroke-width="1.500"/>
<circle cx="1081.2" cy="406.2" r="3.300" fill="#fff" stroke="#4c6ff0" stroke-width="1.500"/>
<circle cx="1129.1" cy="410.7" r="3.300" fill="#fff" stroke="#4c6ff0" stroke-width="1.500"/>
<circle cx="1177.0" cy="419.4" r="3.300" fill="#fff" stroke="#4c6ff0" stroke-width="1.500"/>
<circle cx="1224.9" cy="445.7" r="3.300" fill="#fff" stroke="#4c6ff0" stroke-width="1.500"/>
<circle cx="1272.8" cy="434.2" r="3.300" fill="#fff" stroke="#4c6ff0" stroke-width="1.500"/>
<circle cx="1320.8" cy="451.6" r="3.300" fill="#fff" stroke="#4c6ff0" stroke-width="1.500"/>
<circle cx="1368.7" cy="458.8" r="3.300" fill="#fff" stroke="#4c6ff0" stroke-width="1.500"/>
<circle cx="1416.6" cy="475.6" r="3.300" fill="#fff" stroke="#4c6ff0" stroke-width="1.500"/>
<circle cx="1464.5" cy="439.4" r="3.300" fill="#fff" stroke="#4c6ff0" stroke-width="1.500"/>
<circle cx="1512.4" cy="441.6" r="3.300" fill="#fff" stroke="#4c6ff0" stroke-width="1.500"/>
<circle cx="1560.3" cy="463.7" r="3.300" fill="#fff" stroke="#4c6ff0" stroke-width="1.500"/>
<circle cx="1608.2" cy="490.5" r="3.300" fill="#fff" stroke="#4c6ff0" stroke-width="1.500"/>
<circle cx="1656.1" cy="454.4" r="3.300" fill="#fff" stroke="#4c6ff0" stroke-width="1.500"/>
<circle cx="1704.0" cy="484.1" r="3.300" fill="#fff" stroke="#4c6ff0" stroke-width="1.500"/>
<circle cx="1751.9" cy="414.1" r="3.300" fill="#fff" stroke="#4c6ff0" stroke-width="1.500"/>
<circle cx="1799.8" cy="408.1" r="3.300" fill="#fff" stroke="#4c6ff0" stroke-width="1.500"/>
<circle cx="1847.8" cy="422.1" r="3.300" fill="#fff" stroke="#4c6ff0" stroke-width="1.500"/>
<rect x="604" y="628.3" width="1261" height="44.40000000000009" fill="#d9e0ea"/>
<path d="M604 672.7 L604.0 647.3 L607.0 659.5 L610.0 662.0 L613.0 660.6 L616.0 658.1 L619.0 656.7 L622.0 657.6 L625.0 658.4 L628.0 658.6 L631.0 659.2 L634.0 661.2 L637.0 658.1 L640.0 657.6 L643.0 659.4 L646.0 661.4 L649.0 660.5 L652.0 660.4 L655.0 658.8 L658.0 656.1 L661.0 653.8 L664.0 653.5 L667.0 653.0 L670.1 652.1 L673.1 652.6 L676.1 657.4 L679.1 657.8 L682.1 658.2 L685.1 659.4 L688.1 658.8 L691.1 658.6 L694.1 660.1 L697.1 661.6 L700.1 658.9 L703.1 659.3 L706.1 661.1 L709.1 661.4 L712.1 661.8 L715.1 661.2 L718.1 660.0 L721.1 658.3 L724.1 657.4 L727.1 657.1 L730.1 653.8 L733.1 653.5 L736.1 652.9 L739.1 654.0 L742.1 651.4 L745.1 652.2 L748.1 646.3 L751.1 645.7 L754.1 646.1 L757.1 652.1 L760.1 656.3 L763.1 657.7 L766.1 659.9 L769.1 662.8 L772.1 660.1 L775.1 659.9 L778.1 659.4 L781.1 656.0 L784.1 655.5 L787.1 655.8 L790.1 656.5 L793.1 655.7 L796.2 657.7 L799.2 654.5 L802.2 653.1 L805.2 653.9 L808.2 659.6 L811.2 661.0 L814.2 661.8 L817.2 652.3 L820.2 649.3 L823.2 646.5 L826.2 648.3 L829.2 661.9 L832.2 660.6 L835.2 659.3 L838.2 661.3 L841.2 659.5 L844.2 649.5 L847.2 653.2 L850.2 656.2 L853.2 657.0 L856.2 653.0 L859.2 653.1 L862.2 663.8 L865.2 666.6 L868.2 656.8 L871.2 647.4 L874.2 645.3 L877.2 645.9 L880.2 646.9 L883.2 644.8 L886.2 644.3 L889.2 644.9 L892.2 646.3 L895.2 644.5 L898.2 651.2 L901.2 654.8 L904.2 655.8 L907.2 650.6 L910.2 647.7 L913.2 646.8 L916.2 640.5 L919.2 637.6 L922.3 637.3 L925.3 640.4 L928.3 651.3 L931.3 650.5 L934.3 650.5 L937.3 653.2 L940.3 655.4 L943.3 656.4 L946.3 658.4 L949.3 660.2 L952.3 655.0 L955.3 653.5 L958.3 651.2 L961.3 649.2 L964.3 647.5 L967.3 650.0 L970.3 649.2 L973.3 648.2 L976.3 647.0 L979.3 646.5 L982.3 644.8 L985.3 644.4 L988.3 644.8 L991.3 648.7 L994.3 643.9 L997.3 642.5 L1000.3 641.9 L1003.3 646.6 L1006.3 647.0 L1009.3 646.4 L1012.3 648.1 L1015.3 649.3 L1018.3 649.4 L1021.3 649.2 L1024.3 652.8 L1027.3 652.3 L1030.3 652.6 L1033.3 649.9 L1036.3 652.3 L1039.3 652.5 L1042.3 650.6 L1045.3 650.3 L1048.4 650.1 L1051.4 650.1 L1054.4 651.5 L1057.4 650.7 L1060.4 650.0 L1063.4 652.0 L1066.4 650.9 L1069.4 649.3 L1072.4 648.7 L1075.4 650.1 L1078.4 651.5 L1081.4 648.1 L1084.4 646.1 L1087.4 647.4 L1090.4 644.7 L1093.4 641.2 L1096.4 640.7 L1099.4 642.4 L1102.4 648.6 L1105.4 649.9 L1108.4 652.1 L1111.4 654.4 L1114.4 656.8 L1117.4 656.0 L1120.4 657.7 L1123.4 652.5 L1126.4 647.4 L1129.4 647.1 L1132.4 647.0 L1135.4 646.3 L1138.4 645.9 L1141.4 645.8 L1144.4 647.4 L1147.4 647.4 L1150.4 645.3 L1153.4 645.9 L1156.4 647.2 L1159.4 647.9 L1162.4 646.2 L1165.4 647.4 L1168.4 648.4 L1171.5 647.9 L1174.5 647.6 L1177.5 647.9 L1180.5 648.2 L1183.5 649.0 L1186.5 645.9 L1189.5 645.3 L1192.5 643.5 L1195.5 644.6 L1198.5 644.8 L1201.5 645.3 L1204.5 645.8 L1207.5 645.7 L1210.5 646.5 L1213.5 648.9 L1216.5 650.9 L1219.5 652.7 L1222.5 653.8 L1225.5 655.1 L1228.5 654.0 L1231.5 652.9 L1234.5 653.4 L1237.5 656.3 L1240.5 654.4 L1243.5 651.6 L1246.5 651.8 L1249.5 652.9 L1252.5 651.2 L1255.5 649.3 L1258.5 647.4 L1261.5 647.7 L1264.5 648.4 L1267.5 647.2 L1270.5 648.0 L1273.5 651.2 L1276.5 651.3 L1279.5 651.4 L1282.5 651.2 L1285.5 651.0 L1288.5 650.6 L1291.5 653.4 L1294.5 653.4 L1297.5 652.6 L1300.6 653.1 L1303.6 650.5 L1306.6 650.1 L1309.6 648.7 L1312.6 650.2 L1315.6 648.5 L1318.6 654.1 L1321.6 652.9 L1324.6 654.3 L1327.6 655.4 L1330.6 655.7 L1333.6 656.2 L1336.6 655.8 L1339.6 654.2 L1342.6 656.1 L1345.6 656.0 L1348.6 654.4 L1351.6 653.2 L1354.6 653.4 L1357.6 652.3 L1360.6 653.2 L1363.6 654.8 L1366.6 655.8 L1369.6 654.4 L1372.6 655.7 L1375.6 655.1 L1378.6 654.3 L1381.6 651.9 L1384.6 652.9 L1387.6 652.6 L1390.6 652.9 L1393.6 652.5 L1396.6 653.9 L1399.6 654.5 L1402.6 653.4 L1405.6 651.6 L1408.6 652.4 L1411.6 656.6 L1414.6 658.9 L1417.6 657.3 L1420.6 659.0 L1423.7 658.0 L1426.7 658.9 L1429.7 662.6 L1432.7 660.4 L1435.7 658.9 L1438.7 662.0 L1441.7 661.6 L1444.7 661.0 L1447.7 662.8 L1450.7 663.5 L1453.7 663.2 L1456.7 664.9 L1459.7 666.0 L1462.7 666.2 L1465.7 652.3 L1468.7 652.2 L1471.7 654.1 L1474.7 654.4 L1477.7 651.8 L1480.7 647.1 L1483.7 648.4 L1486.7 647.3 L1489.7 654.9 L1492.7 656.3 L1495.7 656.7 L1498.7 658.6 L1501.7 657.9 L1504.7 657.2 L1507.7 660.7 L1510.7 657.0 L1513.7 653.5 L1516.7 652.5 L1519.7 651.6 L1522.7 649.3 L1525.7 650.4 L1528.7 651.4 L1531.7 652.2 L1534.7 653.3 L1537.7 656.2 L1540.7 657.6 L1543.7 659.6 L1546.7 658.7 L1549.8 656.9 L1552.8 658.2 L1555.8 655.6 L1558.8 653.3 L1561.8 651.2 L1564.8 654.9 L1567.8 659.7 L1570.8 660.2 L1573.8 660.0 L1576.8 659.2 L1579.8 659.6 L1582.8 660.9 L1585.8 658.8 L1588.8 659.3 L1591.8 661.5 L1594.8 665.0 L1597.8 662.9 L1600.8 662.2 L1603.8 661.8 L1606.8 663.7 L1609.8 662.5 L1612.8 662.0 L1615.8 661.4 L1618.8 660.7 L1621.8 660.8 L1624.8 661.5 L1627.8 657.4 L1630.8 657.2 L1633.8 659.1 L1636.8 659.3 L1639.8 660.2 L1642.8 660.7 L1645.8 660.9 L1648.8 662.4 L1651.8 661.4 L1654.8 661.2 L1657.8 660.5 L1660.8 655.6 L1663.8 654.2 L1666.8 655.7 L1669.8 660.3 L1672.8 659.6 L1675.8 662.7 L1678.9 663.7 L1681.9 661.7 L1684.9 662.2 L1687.9 662.3 L1690.9 661.8 L1693.9 663.2 L1696.9 662.1 L1699.9 663.4 L1702.9 661.9 L1705.9 662.2 L1708.9 661.0 L1711.9 662.9 L1714.9 663.5 L1717.9 663.6 L1720.9 663.2 L1723.9 661.9 L1726.9 661.2 L1729.9 664.0 L1732.9 664.3 L1735.9 663.9 L1738.9 662.4 L1741.9 650.8 L1744.9 648.1 L1747.9 643.1 L1750.9 642.7 L1753.9 643.0 L1756.9 645.6 L1759.9 646.3 L1762.9 645.5 L1765.9 647.2 L1768.9 649.2 L1771.9 648.1 L1774.9 648.4 L1777.9 645.3 L1780.9 644.6 L1783.9 643.6 L1786.9 644.1 L1789.9 643.9 L1792.9 644.6 L1795.9 643.9 L1798.9 644.8 L1802.0 644.8 L1805.0 646.0 L1808.0 643.9 L1811.0 639.2 L1814.0 641.3 L1817.0 650.0 L1820.0 649.7 L1823.0 652.2 L1826.0 653.2 L1829.0 653.4 L1832.0 651.0 L1835.0 650.9 L1838.0 650.9 L1841.0 652.3 L1844.0 651.8 L1847.0 649.5 L1850.0 646.7 L1853.0 648.4 L1856.0 649.2 L1859.0 647.0 L1862.0 644.4 L1865.0 642.1 L1865 672.7Z" fill="#cfd6e1"/>
<path d="M604.0 647.3 607.0 659.5 610.0 662.0 613.0 660.6 616.0 658.1 619.0 656.7 622.0 657.6 625.0 658.4 628.0 658.6 631.0 659.2 634.0 661.2 637.0 658.1 640.0 657.6 643.0 659.4 646.0 661.4 649.0 660.5 652.0 660.4 655.0 658.8 658.0 656.1 661.0 653.8 664.0 653.5 667.0 653.0 670.1 652.1 673.1 652.6 676.1 657.4 679.1 657.8 682.1 658.2 685.1 659.4 688.1 658.8 691.1 658.6 694.1 660.1 697.1 661.6 700.1 658.9 703.1 659.3 706.1 661.1 709.1 661.4 712.1 661.8 715.1 661.2 718.1 660.0 721.1 658.3 724.1 657.4 727.1 657.1 730.1 653.8 733.1 653.5 736.1 652.9 739.1 654.0 742.1 651.4 745.1 652.2 748.1 646.3 751.1 645.7 754.1 646.1 757.1 652.1 760.1 656.3 763.1 657.7 766.1 659.9 769.1 662.8 772.1 660.1 775.1 659.9 778.1 659.4 781.1 656.0 784.1 655.5 787.1 655.8 790.1 656.5 793.1 655.7 796.2 657.7 799.2 654.5 802.2 653.1 805.2 653.9 808.2 659.6 811.2 661.0 814.2 661.8 817.2 652.3 820.2 649.3 823.2 646.5 826.2 648.3 829.2 661.9 832.2 660.6 835.2 659.3 838.2 661.3 841.2 659.5 844.2 649.5 847.2 653.2 850.2 656.2 853.2 657.0 856.2 653.0 859.2 653.1 862.2 663.8 865.2 666.6 868.2 656.8 871.2 647.4 874.2 645.3 877.2 645.9 880.2 646.9 883.2 644.8 886.2 644.3 889.2 644.9 892.2 646.3 895.2 644.5 898.2 651.2 901.2 654.8 904.2 655.8 907.2 650.6 910.2 647.7 913.2 646.8 916.2 640.5 919.2 637.6 922.3 637.3 925.3 640.4 928.3 651.3 931.3 650.5 934.3 650.5 937.3 653.2 940.3 655.4 943.3 656.4 946.3 658.4 949.3 660.2 952.3 655.0 955.3 653.5 958.3 651.2 961.3 649.2 964.3 647.5 967.3 650.0 970.3 649.2 973.3 648.2 976.3 647.0 979.3 646.5 982.3 644.8 985.3 644.4 988.3 644.8 991.3 648.7 994.3 643.9 997.3 642.5 1000.3 641.9 1003.3 646.6 1006.3 647.0 1009.3 646.4 1012.3 648.1 1015.3 649.3 1018.3 649.4 1021.3 649.2 1024.3 652.8 1027.3 652.3 1030.3 652.6 1033.3 649.9 1036.3 652.3 1039.3 652.5 1042.3 650.6 1045.3 650.3 1048.4 650.1 1051.4 650.1 1054.4 651.5 1057.4 650.7 1060.4 650.0 1063.4 652.0 1066.4 650.9 1069.4 649.3 1072.4 648.7 1075.4 650.1 1078.4 651.5 1081.4 648.1 1084.4 646.1 1087.4 647.4 1090.4 644.7 1093.4 641.2 1096.4 640.7 1099.4 642.4 1102.4 648.6 1105.4 649.9 1108.4 652.1 1111.4 654.4 1114.4 656.8 1117.4 656.0 1120.4 657.7 1123.4 652.5 1126.4 647.4 1129.4 647.1 1132.4 647.0 1135.4 646.3 1138.4 645.9 1141.4 645.8 1144.4 647.4 1147.4 647.4 1150.4 645.3 1153.4 645.9 1156.4 647.2 1159.4 647.9 1162.4 646.2 1165.4 647.4 1168.4 648.4 1171.5 647.9 1174.5 647.6 1177.5 647.9 1180.5 648.2 1183.5 649.0 1186.5 645.9 1189.5 645.3 1192.5 643.5 1195.5 644.6 1198.5 644.8 1201.5 645.3 1204.5 645.8 1207.5 645.7 1210.5 646.5 1213.5 648.9 1216.5 650.9 1219.5 652.7 1222.5 653.8 1225.5 655.1 1228.5 654.0 1231.5 652.9 1234.5 653.4 1237.5 656.3 1240.5 654.4 1243.5 651.6 1246.5 651.8 1249.5 652.9 1252.5 651.2 1255.5 649.3 1258.5 647.4 1261.5 647.7 1264.5 648.4 1267.5 647.2 1270.5 648.0 1273.5 651.2 1276.5 651.3 1279.5 651.4 1282.5 651.2 1285.5 651.0 1288.5 650.6 1291.5 653.4 1294.5 653.4 1297.5 652.6 1300.6 653.1 1303.6 650.5 1306.6 650.1 1309.6 648.7 1312.6 650.2 1315.6 648.5 1318.6 654.1 1321.6 652.9 1324.6 654.3 1327.6 655.4 1330.6 655.7 1333.6 656.2 1336.6 655.8 1339.6 654.2 1342.6 656.1 1345.6 656.0 1348.6 654.4 1351.6 653.2 1354.6 653.4 1357.6 652.3 1360.6 653.2 1363.6 654.8 1366.6 655.8 1369.6 654.4 1372.6 655.7 1375.6 655.1 1378.6 654.3 1381.6 651.9 1384.6 652.9 1387.6 652.6 1390.6 652.9 1393.6 652.5 1396.6 653.9 1399.6 654.5 1402.6 653.4 1405.6 651.6 1408.6 652.4 1411.6 656.6 1414.6 658.9 1417.6 657.3 1420.6 659.0 1423.7 658.0 1426.7 658.9 1429.7 662.6 1432.7 660.4 1435.7 658.9 1438.7 662.0 1441.7 661.6 1444.7 661.0 1447.7 662.8 1450.7 663.5 1453.7 663.2 1456.7 664.9 1459.7 666.0 1462.7 666.2 1465.7 652.3 1468.7 652.2 1471.7 654.1 1474.7 654.4 1477.7 651.8 1480.7 647.1 1483.7 648.4 1486.7 647.3 1489.7 654.9 1492.7 656.3 1495.7 656.7 1498.7 658.6 1501.7 657.9 1504.7 657.2 1507.7 660.7 1510.7 657.0 1513.7 653.5 1516.7 652.5 1519.7 651.6 1522.7 649.3 1525.7 650.4 1528.7 651.4 1531.7 652.2 1534.7 653.3 1537.7 656.2 1540.7 657.6 1543.7 659.6 1546.7 658.7 1549.8 656.9 1552.8 658.2 1555.8 655.6 1558.8 653.3 1561.8 651.2 1564.8 654.9 1567.8 659.7 1570.8 660.2 1573.8 660.0 1576.8 659.2 1579.8 659.6 1582.8 660.9 1585.8 658.8 1588.8 659.3 1591.8 661.5 1594.8 665.0 1597.8 662.9 1600.8 662.2 1603.8 661.8 1606.8 663.7 1609.8 662.5 1612.8 662.0 1615.8 661.4 1618.8 660.7 1621.8 660.8 1624.8 661.5 1627.8 657.4 1630.8 657.2 1633.8 659.1 1636.8 659.3 1639.8 660.2 1642.8 660.7 1645.8 660.9 1648.8 662.4 1651.8 661.4 1654.8 661.2 1657.8 660.5 1660.8 655.6 1663.8 654.2 1666.8 655.7 1669.8 660.3 1672.8 659.6 1675.8 662.7 1678.9 663.7 1681.9 661.7 1684.9 662.2 1687.9 662.3 1690.9 661.8 1693.9 663.2 1696.9 662.1 1699.9 663.4 1702.9 661.9 1705.9 662.2 1708.9 661.0 1711.9 662.9 1714.9 663.5 1717.9 663.6 1720.9 663.2 1723.9 661.9 1726.9 661.2 1729.9 664.0 1732.9 664.3 1735.9 663.9 1738.9 662.4 1741.9 650.8 1744.9 648.1 1747.9 643.1 1750.9 642.7 1753.9 643.0 1756.9 645.6 1759.9 646.3 1762.9 645.5 1765.9 647.2 1768.9 649.2 1771.9 648.1 1774.9 648.4 1777.9 645.3 1780.9 644.6 1783.9 643.6 1786.9 644.1 1789.9 643.9 1792.9 644.6 1795.9 643.9 1798.9 644.8 1802.0 644.8 1805.0 646.0 1808.0 643.9 1811.0 639.2 1814.0 641.3 1817.0 650.0 1820.0 649.7 1823.0 652.2 1826.0 653.2 1829.0 653.4 1832.0 651.0 1835.0 650.9 1838.0 650.9 1841.0 652.3 1844.0 651.8 1847.0 649.5 1850.0 646.7 1853.0 648.4 1856.0 649.2 1859.0 647.0 1862.0 644.4 1865.0 642.1" fill="none" stroke="#c2cad8" stroke-width="1"/>
<path d="M604 628.3V672.7" stroke="#a3b1cc" stroke-width="1.700"/>
<rect x="598.5" y="641" width="11" height="19.500" rx="1.500" fill="#a6b4d0"/>
<path d="M601.5 648h5M601.5 653.500h5" stroke="#fff" stroke-width="1.600"/>
<path d="M1865 628.3V672.7" stroke="#a3b1cc" stroke-width="1.700"/>
<rect x="1859.5" y="641" width="11" height="19.500" rx="1.500" fill="#a6b4d0"/>
<path d="M1862.5 648h5M1862.5 653.500h5" stroke="#fff" stroke-width="1.600"/>
</svg>
<div class="abs" style="left:260px;top:573.5px;width:1454px;height:127px;border:1px solid #eaeaea"></div>
<div class="abs" style="left:278px;top:582.5px;width:4px;height:24px;background:#3a9bf2;border-radius:1px"></div>
<div class="abs" style="left:292px;top:581px;font-size:18px;line-height:26px;color:#2a7fd6;white-space:nowrap">A相电压(V)</div>
<div class="abs" style="left:414.5px;top:583px;font-size:15px;line-height:22px;color:#2a7fd6;white-space:nowrap">切换</div>
<svg class="abs" style="left:448px;top:588px" width="15" height="13" viewBox="0 0 15 13" fill="#2a8be6"><path d="M4.500 0L0 3.500 4.500 7V4.700H12V2.300H4.500z"/><path d="M10.500 6L15 9.500 10.500 13v-2.300H3V8.300h7.500z"/></svg>
<div class="abs st" style="left:278px;top:637px">最大值:</div><div class="abs st" style="left:341px;top:637px">229.00(2025-02-12 03:06:00)</div>
<div class="abs st" style="left:750.5px;top:637px">最小值:</div><div class="abs st" style="left:814px;top:637px">221.50(2025-02-12 02:32:00)</div>
<div class="abs st" style="left:1223px;top:637px">平均值:</div><div class="abs st" style="left:1287px;top:637px">224.89</div>
<div class="abs" style="left:260px;top:716px;width:4px;height:26px;background:#3a9bf2;border-radius:1px"></div>
<div class="abs" style="left:274.5px;top:715.5px;font-size:18px;line-height:26px;color:#2a7fd6;white-space:nowrap">选择数据项</div>
<div class="abs cell" style="left:260.4px;top:774.9px;width:290.6px;height:46.6px;line-height:47.2px">A相电压(V)</div>
<div class="abs cell" style="left:551.0px;top:774.9px;width:290.6px;height:46.6px;line-height:47.2px">B相电压(V)</div>
<div class="abs cell" style="left:841.7px;top:774.9px;width:290.6px;height:46.6px;line-height:47.2px">C相电压(V)</div>
<div class="abs cell" style="left:1132.3px;top:774.9px;width:290.6px;height:46.6px;line-height:47.2px">A相电流(A)</div>
<div class="abs cell" style="left:1423.0px;top:774.9px;width:290.6px;height:46.6px;line-height:47.2px">B相电流(A)</div>
<div class="abs cell" style="left:260.4px;top:821.5px;width:290.6px;height:48.2px;line-height:48.6px">C相电流(A)</div>
<div class="abs cell" style="left:551.0px;top:821.5px;width:290.6px;height:48.2px;line-height:48.6px">总有功功率(kW)</div>
<div class="abs cell" style="left:841.7px;top:821.5px;width:290.6px;height:48.2px;line-height:48.6px">总无功功率(kvar)</div>
<div class="abs cell" style="left:1132.3px;top:821.5px;width:290.6px;height:48.2px;line-height:48.6px">总功率因数</div>
<div class="abs cell" style="left:1423.0px;top:821.5px;width:290.6px;height:48.2px;line-height:48.6px">频率(Hz)</div>
<div class="abs" style="left:260px;top:774.6px;width:291px;height:47.2px;border:1.500px solid #2a8be6"></div>
<svg class="abs" style="left:514px;top:775px" width="37" height="37" viewBox="0 0 37 37"><path d="M0 0H37V37z" fill="#178ffa"/><path d="M18.500 10.500L24.500 16.800L36.500 4.500" fill="none" stroke="#fff" stroke-width="2.200"/></svg>
<div class="abs" style="left:942px;top:895px;font-size:15px;line-height:22px;color:#2a7fd6;white-space:nowrap">显示全部</div>
<svg class="abs" style="left:1010px;top:898.5px" width="18" height="11" viewBox="0 0 18 11"><path d="M0 0h18L9 11z" fill="#178ffa"/></svg>
<div class="abs btn" style="left:1640px;top:946px;width:74px;height:37.500px;line-height:37px;font-size:15px">导出</div>
<div class="abs" style="left:260.5px;top:1012px;width:1453px;height:60px;border:1px solid #ebeef5"></div>
<div class="abs" style="left:409.5px;top:1012px;width:1px;height:60px;background:#ebeef5"></div>
<div class="abs" style="left:1061.5px;top:1012px;width:1px;height:60px;background:#ebeef5"></div>
<div class="abs" style="left:300px;top:1029px;font-size:15px;color:#909399;white-space:nowrap">序号</div>
<div class="abs" style="left:700px;top:1029px;font-size:15px;color:#909399;white-space:nowrap">时间</div>
<div class="abs" style="left:1340px;top:1029px;font-size:15px;color:#909399;white-space:nowrap">A相电压(V)</div>
</div>
</div><!-- panel -->
<div class="abs" style="left:1952px;top:521px;width:90px;height:106px;border-radius:12px 0 0 12px;background:rgba(0,0,0,.5)">
<svg class="abs" style="left:8px;top:7px" width="12" height="12" viewBox="0 0 12 12"><path d="M1 1l10 10M11 1L1 11" stroke="#fff" stroke-width="1.500"/></svg>
<svg class="abs" style="left:24px;top:25px" width="38" height="38" viewBox="0 0 38 38" fill="none" stroke="#fff" stroke-width="2" stroke-linejoin="round"><path d="M9 16V4a2 2 0 0 1 2-2h16a2 2 0 0 1 2 2v12"/><path d="M14 9h10M14 14h6" stroke-width="2.400"/><path d="M2 14l7-4M36 14l-7-4M2 14v19a2 2 0 0 0 2 2h30a2 2 0 0 0 2-2V14L19 24z"/></svg>
<div class="abs" style="left:0;top:62px;width:85px;text-align:center;color:#fff;font-size:15px;line-height:22px;white-space:nowrap">反馈咨询</div></div>
</div>
</body>
</html>
